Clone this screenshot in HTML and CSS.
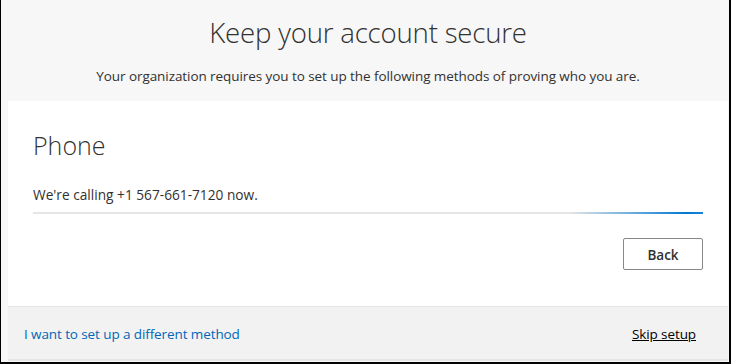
FILE: index.html
```html
<!DOCTYPE html>
<html lang="en">
<head>
<meta charset="utf-8">
<title>Keep your account secure</title>
<link rel="stylesheet" href="styles.css">
</head>
<body>
<div class="frame">
  <header class="intro">
    <h1 class="title">Keep your account secure</h1>
    <p class="subtitle">Your organization requires you to set up the following methods of proving who you are.</p>
  </header>
  <section class="panel">
    <div class="panel-body">
      <h2 class="method">Phone</h2>
      <p class="status">We're calling +1 567-661-7120 now.</p>
      <div class="progress"><div class="progress-fill"></div></div>
      <div class="actions">
        <button class="btn" type="button">Back</button>
      </div>
    </div>
    <footer class="panel-footer">
      <a class="alt-link" href="#">I want to set up a different method</a>
      <a class="skip-link" href="#">Skip setup</a>
    </footer>
  </section>
</div>
</body>
</html>
```
FILE: styles.css
```css
* { box-sizing: border-box; }
html, body { margin: 0; padding: 0; }
body {
  font-family: "Open Sans", "Noto Sans", "Liberation Sans", sans-serif;
  color: #323130;
  background: #ffffff;
}
.frame {
  width: 731px;
  height: 364px;
  background: #f7f7f7;
  border-left: 1px solid #000;
  border-right: 2px solid #000;
  border-bottom: 2px solid #000;
  padding: 0 1px 0 7px;
  display: flex;
  flex-direction: column;
}
.intro {
  height: 101px;
  text-align: center;
  padding-top: 13px;
}
.title {
  margin: 0;
  font-weight: 300;
  font-size: 27.6px;
  line-height: 38px;
  color: #323130;
  letter-spacing: -0.2px;
}
.subtitle {
  margin: 15px 0 0;
  font-size: 13.5px;
  line-height: 20px;
  color: #323130;
  letter-spacing: -0.07px;
}
.panel {
  flex: 1;
  display: flex;
  flex-direction: column;
  background: #fff;
  border-bottom: 2px solid #e6e6e6;
  margin-bottom: 1px;
}
.panel-body {
  flex: 1;
  padding: 25px 25px 0 25px;
}
.method {
  margin: 0;
  font-weight: 300;
  font-size: 25px;
  line-height: 38px;
  color: #323130;
}
.status {
  margin: 21px 0 0;
  font-size: 13.7px;
  line-height: 20px;
  letter-spacing: 0;
}
.progress {
  margin-top: 7px;
  height: 2px;
  background: #e6e6e6;
  position: relative;
}
.progress-fill {
  position: absolute;
  right: 0;
  top: 0;
  height: 2px;
  width: 135px;
  background: linear-gradient(to right, rgba(0,120,212,0) 0%, rgba(0,120,212,0.5) 45%, #0078d4 88%, #1a86d9 100%);
}
.actions {
  display: flex;
  justify-content: flex-end;
  margin-top: 24px;
}
.btn {
  width: 80px;
  height: 32px;
  background: #fff;
  border: 1px solid #8a8886;
  border-radius: 2px;
  font-family: inherit;
  font-size: 13.5px;
  font-weight: 600;
  color: #323130;
  padding: 1px 0 0;
}
.panel-footer {
  height: 53px;
  background: #f2f2f2;
  border-top: 1px solid #e6e6e6;
  display: flex;
  align-items: center;
  justify-content: space-between;
  padding: 2px 32px 0 16px;
}
.alt-link {
  color: #0067b8;
  text-decoration: none;
  font-size: 13.5px;
  letter-spacing: -0.1px;
}
.skip-link {
  color: #000;
  text-decoration: underline;
  font-size: 13.5px;
  letter-spacing: -0.1px;
}
```
